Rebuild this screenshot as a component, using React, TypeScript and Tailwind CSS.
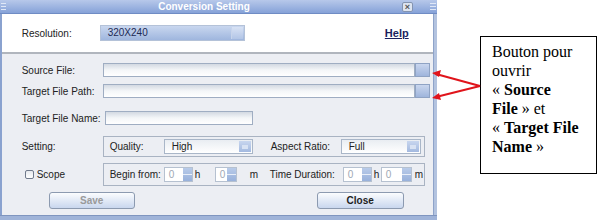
import React from 'react';

const sans = { fontFamily: '"Liberation Sans", Arial, sans-serif' };

function Field({ w, btn }: { w: string; btn?: boolean }) {
  return (
    <div className={`flex h-[14px] ${w}`}>
      <div className="flex-1 border border-[#9fadc2] bg-gradient-to-b from-[#d3d9e2] via-[#f4f6f8] to-white" />
      {btn && (
        <div className="w-[15px] border border-[#8fa3c4] bg-gradient-to-b from-[#c9d6ee] to-[#9fb5dc]" />
      )}
    </div>
  );
}

function Combo({ w, text }: { w: string; text: string }) {
  return (
    <div className={`flex h-[15px] ${w} border border-[#a9b6c8] bg-gradient-to-b from-[#e9edf2] to-white`}>
      <div className="flex-1 pl-[7px] text-[10px] leading-[13px] text-[#222]">{text}</div>
      <div className="w-[12px] m-[1px] bg-gradient-to-b from-[#c8d6ef] to-[#a3b9df] flex items-center justify-center">
        <div className="w-[6px] h-[4px] bg-[#d8e2f3]" />
      </div>
    </div>
  );
}

function Spin({ w }: { w: string }) {
  return (
    <div className={`flex h-[15px] ${w} shrink-0 border border-[#b6c1d0] bg-white`}>
      <div className="flex-1 pl-[4px] text-[10px] leading-[13px] text-[#a0a8b4]">0</div>
      <div className="w-[9px] flex flex-col bg-gradient-to-b from-[#b9cbe9] to-[#98b1db]">
        <div className="flex-1 border-b border-[#e8eef8]" />
        <div className="flex-1" />
      </div>
    </div>
  );
}

export default function App() {
  return (
    <div className="relative w-[600px] h-[220px] bg-white overflow-hidden flex" style={sans}>
      {/* Dialog */}
      <div className="w-[437px] h-[220px] flex flex-col bg-[#eceef3]">
        {/* Title bar */}
        <div className="h-[14px] flex items-center bg-gradient-to-b from-[#b7c8ea] to-[#86a2d8] border-b border-[#6f8cc4]">
          <div className="w-[6px] h-full flex flex-col justify-center gap-[2px] pl-[1px]">
            <div className="h-px bg-[#dfe7f6]" />
            <div className="h-px bg-[#dfe7f6]" />
            <div className="h-px bg-[#dfe7f6]" />
          </div>
          <div className="flex-1 text-center text-[10px] font-bold text-white leading-none">Conversion Setting</div>
          <div className="w-[11px] h-[10px] mr-[17px] rounded-[2px] border border-[#8494b0] bg-[#dde4f0] text-[9px] leading-[8px] text-center font-bold text-[#555]">×</div>
          <div className="w-[7px] h-full flex flex-col justify-center gap-[2px] pr-[1px]">
            <div className="h-px bg-[#dfe7f6]" />
            <div className="h-px bg-[#dfe7f6]" />
            <div className="h-px bg-[#dfe7f6]" />
          </div>
        </div>

        <div className="flex-1 flex">
          <div className="w-[2px] bg-[#8aa2cf]" />
          <div className="flex-1 flex flex-col">
            {/* Top white section */}
            <div className="h-[38px] bg-white flex items-center pl-[20px] pr-[20px]">
              <div className="w-[78px] text-[10px] text-[#222]">Resolution:</div>
              <div className="flex h-[16px] w-[145px] border border-[#b4c2d8] bg-gradient-to-b from-[#c9d7ef] to-[#9fb6de]">
                <div className="flex-1 pl-[7px] text-[10px] leading-[14px] text-[#1d2a55]">320X240</div>
                <div className="w-[12px] m-[1px] bg-gradient-to-b from-[#d8e2f4] to-[#b2c5e6] border-l border-[#c7d4eb]" />
              </div>
              <div className="flex-1" />
              <div className="mr-[4px] text-[11px] font-bold underline text-[#1b1f5e]">Help</div>
            </div>
            <div className="h-[2px] bg-[#b0b5bd]" />

            {/* Gray section */}
            <div className="flex-1 flex flex-col pl-[20px] pr-[3px] pt-[9px]">
              <div className="flex items-center h-[14px]">
                <div className="w-[81px] text-[10px] text-[#222]">Source File:</div>
                <Field w="w-[327px]" btn />
              </div>
              <div className="flex items-center h-[14px] mt-[7px]">
                <div className="w-[81px] text-[10px] text-[#222]">Target File Path:</div>
                <Field w="w-[327px]" btn />
              </div>
              <div className="flex items-center h-[14px] mt-[13px]">
                <div className="w-[83px] text-[10px] text-[#222]">Target File Name:</div>
                <Field w="w-[148px]" />
              </div>

              <div className="flex items-center mt-[11px]">
                <div className="w-[81px] text-[10px] text-[#222]">Setting:</div>
                <div className="w-[322px] h-[21px] border border-[#a9b3c2] flex items-center pl-[6px]">
                  <div className="w-[54px] text-[10px] text-[#222]">Quality:</div>
                  <Combo w="w-[89px]" text="High" />
                  <div className="w-[88px] pl-[18px] text-[10px] text-[#222]">Aspect Ratio:</div>
                  <Combo w="w-[80px]" text="Full" />
                </div>
              </div>

              <div className="flex items-center mt-[6px]">
                <div className="w-[81px] flex items-center gap-[3px] pl-[3px]">
                  <div className="w-[9px] h-[9px] rounded-[2px] border border-[#707a8c] bg-gradient-to-b from-[#e6e9ee] to-white" />
                  <div className="text-[10px] text-[#222]">Scope</div>
                </div>
                <div className="w-[322px] h-[23px] border border-[#a9b3c2] flex items-center pl-[6px] whitespace-nowrap text-[10px] text-[#222]">
                  <div className="w-[54px] shrink-0">Begin from:</div>
                  <Spin w="w-[29px]" />
                  <div className="w-[22px] shrink-0 pl-[2px]">h</div>
                  <Spin w="w-[22px]" />
                  <div className="w-[33px] shrink-0 pl-[13px]">m</div>
                  <div className="w-[73px] shrink-0">Time Duration:</div>
                  <Spin w="w-[29px]" />
                  <div className="w-[9px] shrink-0 pl-[2px]">h</div>
                  <Spin w="w-[31px]" />
                  <div className="shrink-0 pl-[3px]">m</div>
                </div>
              </div>

              <div className="flex mt-[6px] h-[17px]">
                <div className="ml-[27px] w-[86px] rounded-[3px] border border-[#8c9ab0] bg-gradient-to-b from-[#fbfcfe] to-[#c9d7ee] text-center text-[10px] font-bold leading-[15px] text-[#9a9a9a]">Save</div>
                <div className="ml-[182px] w-[87px] rounded-[3px] border border-[#8c9ab0] bg-gradient-to-b from-[#fbfcfe] to-[#c9d7ee] text-center text-[10px] font-bold leading-[15px] text-[#1e1e1e]">Close</div>
              </div>
            </div>
          </div>
          <div className="w-[5px] bg-[#b3c3df] border-l border-[#8ea3c9]" />
        </div>
        <div className="h-[5px] bg-[#9fb3d8] border-t border-[#7f95bf]" />
      </div>

      {/* Annotation */}
      <div className="flex-1 pl-[43px] pt-[36px]">
        <div
          className="w-[117px] h-[138px] border border-black bg-white pl-[11px] pt-[5px] text-[16px] leading-[19px] text-black whitespace-nowrap"
          style={{ fontFamily: '"Liberation Serif", "Times New Roman", serif' }}
        >
          Bouton pour
          <br />
          ouvrir
          <br />« <b>Source</b>
          <br />
          <b>File</b> » et
          <br />« <b>Target File</b>
          <br />
          <b>Name</b> »
        </div>
      </div>

      {/* Arrows */}
      <svg className="absolute left-0 top-0" width="600" height="220">
        <line x1="480" y1="86" x2="436" y2="74" stroke="#e0141b" strokeWidth="2" />
        <line x1="480" y1="86" x2="436" y2="97" stroke="#e0141b" strokeWidth="2" />
        <path d="M432,73 L441,70 L439,77 Z" fill="#e0141b" />
        <path d="M432,98 L439,93 L441,100 Z" fill="#e0141b" />
      </svg>
    </div>
  );
}
